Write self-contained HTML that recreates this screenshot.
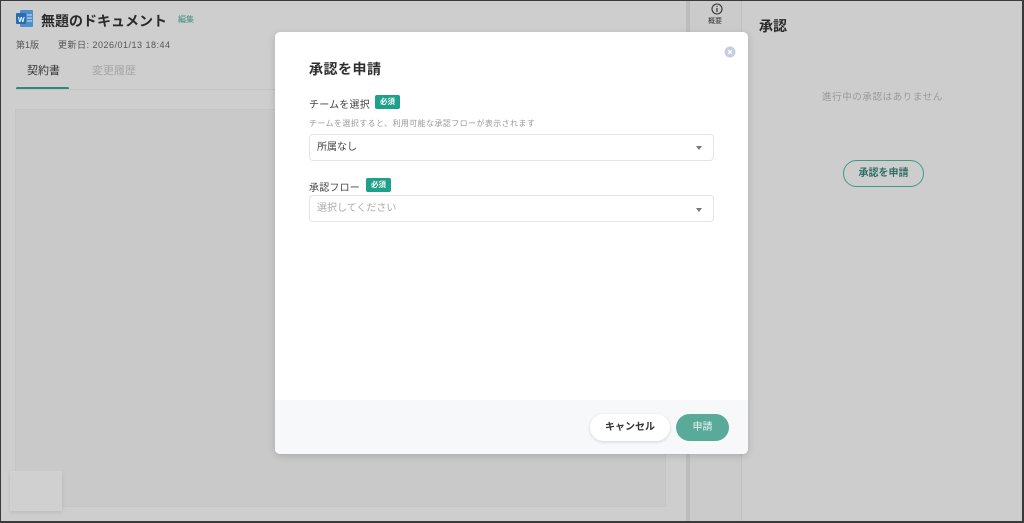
<!DOCTYPE html>
<html><head><meta charset="utf-8"><style>
*{box-sizing:border-box;margin:0;padding:0}
body{width:1024px;height:523px;overflow:hidden;font-family:"Liberation Sans","Noto Sans CJK JP",sans-serif;background:#3a3a3a;position:relative}
.frame{position:absolute;left:1px;top:1px;right:2px;bottom:2px;background:#cdcdcd;overflow:hidden}
.abs{position:absolute}
</style></head><body>
<div class="frame">
  <div class="abs" style="left:0;top:0;width:685px;height:521px;background:#cecece"></div>
  <div class="abs" style="left:14px;top:108px;width:651px;height:398px;background:#c9c9c9;border:1px solid #c4c4c4"></div>
  <div class="abs" style="left:9px;top:470px;width:52px;height:40px;background:#d0d0d0;box-shadow:0 2px 4px rgba(0,0,0,.08)"></div>
  <div class="abs" style="left:685px;top:0;width:4px;height:521px;background:#bdbdbf"></div>
  <div class="abs" style="left:689px;top:0;width:52px;height:521px;background:#cbcbcb;border-right:1px solid #c2c2c2"></div>
  <svg class="abs" style="left:14px;top:8px" width="20" height="20" viewBox="0 0 20 20"><rect x="5" y="1" width="13" height="17" rx="1" fill="#4e8fc9"/><rect x="1" y="4" width="10" height="11" rx="1" fill="#2a6db0"/><text x="3" y="13" font-size="7" fill="#fff" font-family="Liberation Sans" font-weight="bold">W</text><path d="M12 6h5M12 9h5M12 12h5" stroke="#cfe0f0" stroke-width="1"/></svg>
  <div class="abs" style="left:40px;top:10px;font-size:14px;font-weight:bold;color:#2a2a2a">無題のドキュメント</div>
  <div class="abs" style="left:177px;top:13px;font-size:8px;color:#3f8a7c">編集</div>
  <div class="abs" style="left:15px;top:37px;font-size:9px;color:#555">第1版</div>
  <div class="abs" style="left:57px;top:37px;font-size:9px;color:#555;letter-spacing:.5px">更新日: 2026/01/13 18:44</div>
  <div class="abs" style="left:26px;top:61px;font-size:11px;color:#333">契約書</div>
  <div class="abs" style="left:91px;top:61px;font-size:11px;color:#a6a6a6">変更履歴</div>
  <div class="abs" style="left:15px;top:86px;width:53px;height:3px;background:#2c8a78;border-radius:2px"></div>
  <div class="abs" style="left:15px;top:88px;width:670px;height:1px;background:#c3c3c3"></div>
  <svg class="abs" style="left:710px;top:2px" width="12" height="12" viewBox="0 0 12 12"><circle cx="6" cy="6" r="5" fill="none" stroke="#333" stroke-width="1.1"/><path d="M6 5v4M6 3v1" stroke="#333" stroke-width="1.2"/></svg>
  <div class="abs" style="left:707px;top:15px;font-size:7px;color:#333">概要</div>
  <div class="abs" style="left:758px;top:15px;font-size:14px;font-weight:bold;color:#2a2a2a">承認</div>
  <div class="abs" style="left:821px;top:88px;font-size:9.5px;color:#999;letter-spacing:.6px">進行中の承認はありません</div>
  <div class="abs" style="left:842px;top:159px;width:81px;height:27px;border:1.5px solid #3f9a88;border-radius:14px;font-size:10px;font-weight:bold;color:#2f6f63;text-align:center;line-height:26px">承認を申請</div>
</div>
<div class="abs" style="left:275px;top:32px;width:473px;height:422px;background:#fff;border-radius:5px;overflow:hidden;box-shadow:0 2px 8px rgba(0,0,0,.15)">
  <svg class="abs" style="left:449px;top:14px" width="12" height="12" viewBox="0 0 12 12"><circle cx="6" cy="6" r="5.5" fill="#c5cbe0"/><path d="M4 4l4 4M8 4l-4 4" stroke="#fff" stroke-width="1.3"/></svg>
  <div class="abs" style="left:34px;top:27px;font-size:14px;font-weight:bold;color:#2e2e2e;letter-spacing:.5px">承認を申請</div>
  <div class="abs" style="left:34px;top:64px;font-size:10px;color:#444;letter-spacing:.2px">チームを選択</div>
  <div class="abs" style="left:100px;top:63px;width:25px;height:14px;background:#1fa08a;border-radius:2px;color:#fff;font-size:7.5px;font-weight:bold;text-align:center;line-height:14px">必須</div>
  <div class="abs" style="left:34px;top:86px;font-size:8px;color:#999;letter-spacing:.4px">チームを選択すると、利用可能な承認フローが表示されます</div>
  <div class="abs" style="left:34px;top:102px;width:405px;height:27px;border:1px solid #e2e4e8;border-radius:4px;font-size:10px;color:#444;padding-left:7px;line-height:26px">所属なし</div>
  <div class="abs" style="left:421px;top:114px;border-left:3.5px solid transparent;border-right:3.5px solid transparent;border-top:4px solid #777"></div>
  <div class="abs" style="left:34px;top:147px;font-size:10px;color:#444;letter-spacing:.2px">承認フロー</div>
  <div class="abs" style="left:91px;top:146px;width:25px;height:14px;background:#1fa08a;border-radius:2px;color:#fff;font-size:7.5px;font-weight:bold;text-align:center;line-height:14px">必須</div>
  <div class="abs" style="left:34px;top:163px;width:405px;height:27px;border:1px solid #e2e4e8;border-radius:4px;font-size:10px;color:#aaa;padding-left:7px;line-height:26px">選択してください</div>
  <div class="abs" style="left:421px;top:176px;border-left:3.5px solid transparent;border-right:3.5px solid transparent;border-top:4px solid #777"></div>
  <div class="abs" style="left:0;top:368px;width:473px;height:54px;background:#f7f8fa"></div>
  <div class="abs" style="left:315px;top:382px;width:80px;height:27px;background:#fff;border-radius:14px;box-shadow:0 1px 3px rgba(0,0,0,.15);font-size:10px;font-weight:bold;color:#333;text-align:center;line-height:28px">キャンセル</div>
  <div class="abs" style="left:401px;top:382px;width:53px;height:27px;background:#5aaa9a;border-radius:14px;font-size:10px;color:#e8f4f1;text-align:center;line-height:28px">申請</div>
</div>
</body></html>
